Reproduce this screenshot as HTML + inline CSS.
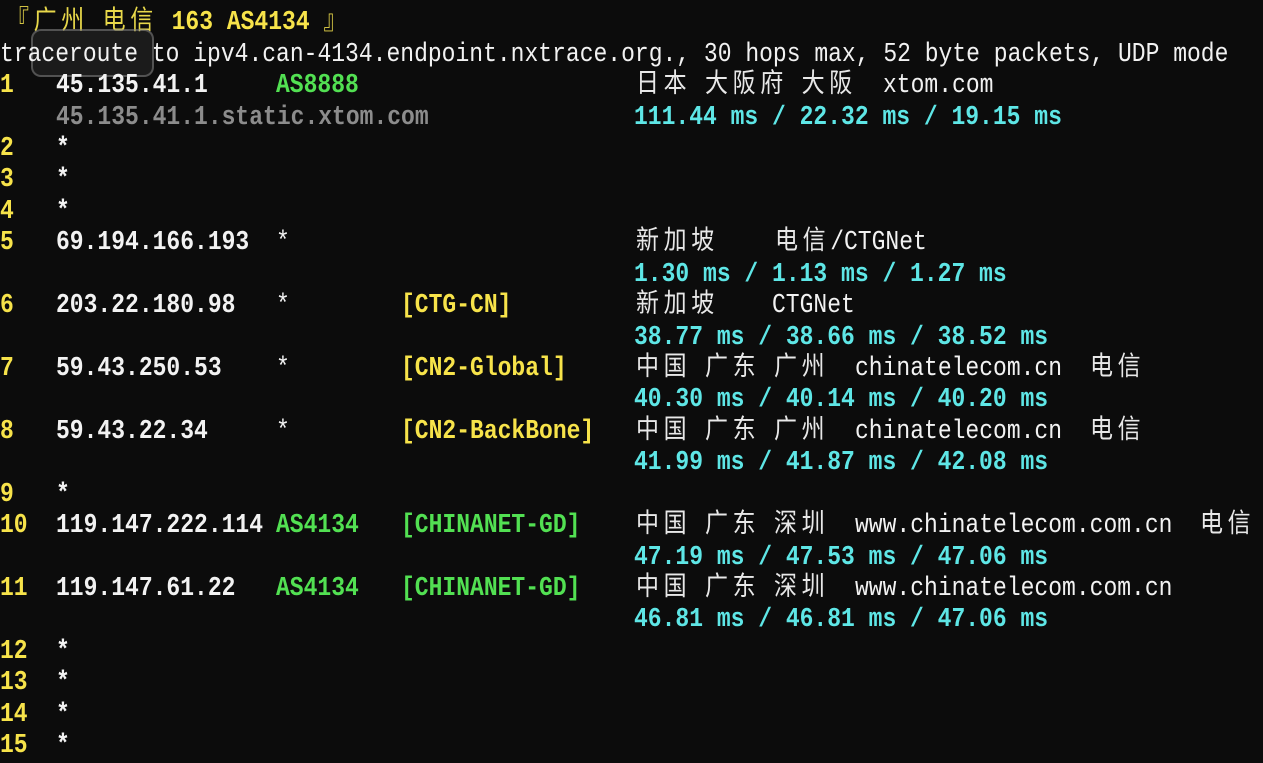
<!DOCTYPE html>
<html><head><meta charset="utf-8"><style>
html,body{margin:0;padding:0;background:#0c0c0c;width:1263px;height:761px;overflow:hidden}
.s{position:absolute;font-family:"Liberation Mono","Noto Sans CJK SC",monospace;font-size:23px;line-height:31px;white-space:pre;font-weight:bold;color:#f2f2f2;transform:translateY(2px) scaleY(1.15);transform-origin:0 50%}
.r{font-weight:normal}
.y{color:#f7e34a}.g{color:#52e052}.c{color:#5ee6e6}.gr{color:#8c8c8c}.w{color:#f2f2f2}
.cj{font-family:"Liberation Mono","Noto Sans CJK SC",sans-serif;font-weight:normal;color:#e8e8e8;font-size:23px;letter-spacing:4.6px;word-spacing:-4.6px}
.ai{position:absolute;left:31px;top:29px;width:119px;height:44px;border:2px solid rgba(150,150,150,.45);border-radius:10px;background:rgba(90,90,90,.2)}
</style></head><body>
<div class="s y" style="left:6px;top:5px"><span class="cj" style="color:#e8d84a">『广州 电信 </span>163 AS4134 <span class="cj" style="color:#e8d84a">』</span></div>
<div class="ai"></div>
<div class="s r" style="left:0;top:37px">traceroute to ipv4.can-4134.endpoint.nxtrace.org., 30 hops max, 52 byte packets, UDP mode</div>

<div class="s y" style="left:0;top:68px">1</div>
<div class="s" style="left:56px;top:68px">45.135.41.1</div>
<div class="s g" style="left:276px;top:68px">AS8888</div>
<div class="s cj" style="left:636px;top:68px">日本 大阪府 大阪</div>
<div class="s r" style="left:883px;top:68px">xtom.com</div>
<div class="s gr" style="left:56px;top:100px">45.135.41.1.static.xtom.com</div>
<div class="s c" style="left:634px;top:100px">111.44 ms / 22.32 ms / 19.15 ms</div>

<div class="s y" style="left:0;top:131px">2</div><div class="s" style="left:56px;top:131px">*</div>
<div class="s y" style="left:0;top:162px">3</div><div class="s" style="left:56px;top:162px">*</div>
<div class="s y" style="left:0;top:194px">4</div><div class="s" style="left:56px;top:194px">*</div>

<div class="s y" style="left:0;top:225px">5</div>
<div class="s" style="left:56px;top:225px">69.194.166.193</div>
<div class="s r" style="left:276px;top:225px">*</div>
<div class="s cj" style="left:636px;top:225px">新加坡</div>
<div class="s r" style="left:775px;top:225px"><span class="cj">电信</span>/CTGNet</div>
<div class="s c" style="left:634px;top:257px">1.30 ms / 1.13 ms / 1.27 ms</div>

<div class="s y" style="left:0;top:288px">6</div>
<div class="s" style="left:56px;top:288px">203.22.180.98</div>
<div class="s r" style="left:276px;top:288px">*</div>
<div class="s y" style="left:401px;top:288px">[CTG-CN]</div>
<div class="s cj" style="left:636px;top:288px">新加坡</div>
<div class="s r" style="left:772px;top:288px">CTGNet</div>
<div class="s c" style="left:634px;top:320px">38.77 ms / 38.66 ms / 38.52 ms</div>

<div class="s y" style="left:0;top:351px">7</div>
<div class="s" style="left:56px;top:351px">59.43.250.53</div>
<div class="s r" style="left:276px;top:351px">*</div>
<div class="s y" style="left:401px;top:351px">[CN2-Global]</div>
<div class="s cj" style="left:636px;top:351px">中国 广东 广州</div>
<div class="s r" style="left:855px;top:351px">chinatelecom.cn</div>
<div class="s cj" style="left:1090px;top:351px">电信</div>
<div class="s c" style="left:634px;top:382px">40.30 ms / 40.14 ms / 40.20 ms</div>

<div class="s y" style="left:0;top:414px">8</div>
<div class="s" style="left:56px;top:414px">59.43.22.34</div>
<div class="s r" style="left:276px;top:414px">*</div>
<div class="s y" style="left:401px;top:414px">[CN2-BackBone]</div>
<div class="s cj" style="left:636px;top:414px">中国 广东 广州</div>
<div class="s r" style="left:855px;top:414px">chinatelecom.cn</div>
<div class="s cj" style="left:1090px;top:414px">电信</div>
<div class="s c" style="left:634px;top:445px">41.99 ms / 41.87 ms / 42.08 ms</div>

<div class="s y" style="left:0;top:477px">9</div><div class="s" style="left:56px;top:477px">*</div>

<div class="s y" style="left:0;top:508px">10</div>
<div class="s" style="left:56px;top:508px">119.147.222.114</div>
<div class="s g" style="left:276px;top:508px">AS4134</div>
<div class="s g" style="left:401px;top:508px">[CHINANET-GD]</div>
<div class="s cj" style="left:636px;top:508px">中国 广东 深圳</div>
<div class="s r" style="left:855px;top:508px">www.chinatelecom.com.cn</div>
<div class="s cj" style="left:1200px;top:508px">电信</div>
<div class="s c" style="left:634px;top:540px">47.19 ms / 47.53 ms / 47.06 ms</div>

<div class="s y" style="left:0;top:571px">11</div>
<div class="s" style="left:56px;top:571px">119.147.61.22</div>
<div class="s g" style="left:276px;top:571px">AS4134</div>
<div class="s g" style="left:401px;top:571px">[CHINANET-GD]</div>
<div class="s cj" style="left:636px;top:571px">中国 广东 深圳</div>
<div class="s r" style="left:855px;top:571px">www.chinatelecom.com.cn</div>
<div class="s c" style="left:634px;top:602px">46.81 ms / 46.81 ms / 47.06 ms</div>

<div class="s y" style="left:0;top:634px">12</div><div class="s" style="left:56px;top:634px">*</div>
<div class="s y" style="left:0;top:665px">13</div><div class="s" style="left:56px;top:665px">*</div>
<div class="s y" style="left:0;top:697px">14</div><div class="s" style="left:56px;top:697px">*</div>
<div class="s y" style="left:0;top:728px">15</div><div class="s" style="left:56px;top:728px">*</div>
</body></html>
